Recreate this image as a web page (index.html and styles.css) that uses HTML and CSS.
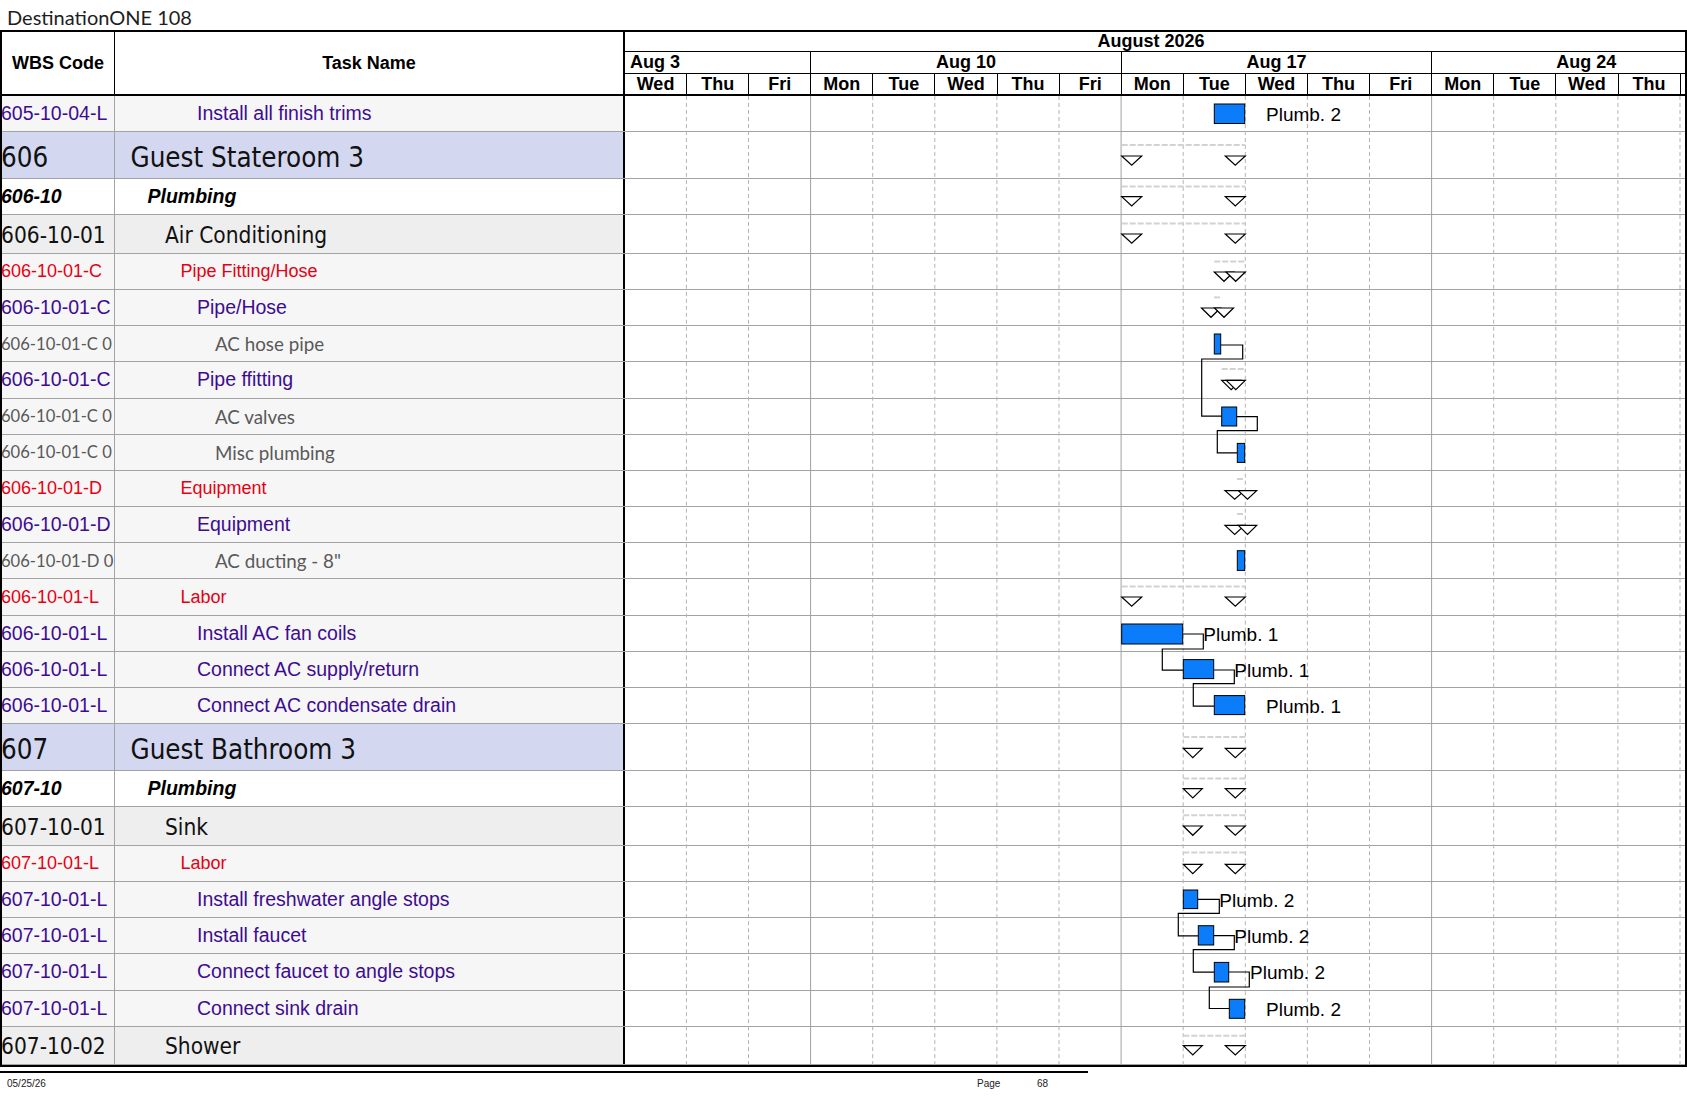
FILE: index.html
```html
<!DOCTYPE html>
<html lang="en">
<head>
<meta charset="utf-8">
<title>DestinationONE 108</title>
<link rel="stylesheet" href="styles.css">
</head>
<body>
<div class="doc-title">DestinationONE 108</div>
<div class="sheet">
  <div class="head">
    <div class="h-wbs">WBS Code</div>
    <div class="h-task">Task Name</div>
    <div class="h-gantt">
      <div class="month">August 2026</div>
      <div class="weeks">
        <div class="wk first">Aug 3</div>
        <div class="wk">Aug 10</div>
        <div class="wk">Aug 17</div>
        <div class="wk">Aug 24</div>
      </div>
      <div class="days">
        <div class="day">Wed</div><div class="day">Thu</div><div class="day">Fri</div>
        <div class="day">Mon</div><div class="day">Tue</div><div class="day">Wed</div><div class="day">Thu</div><div class="day">Fri</div>
        <div class="day">Mon</div><div class="day">Tue</div><div class="day">Wed</div><div class="day">Thu</div><div class="day">Fri</div>
        <div class="day">Mon</div><div class="day">Tue</div><div class="day">Wed</div><div class="day">Thu</div><div class="day stub"></div>
      </div>
    </div>
  </div>

  <div class="body">
    <svg class="grid" width="1060" height="970" viewBox="0 0 1060 970" preserveAspectRatio="none">
      <line class="dl" x1="61.4" y1="0" x2="61.4" y2="970"/>
      <line class="dl" x1="123.5" y1="0" x2="123.5" y2="970"/>
      <line class="wl" x1="185.6" y1="0" x2="185.6" y2="970"/>
      <line class="dl" x1="247.7" y1="0" x2="247.7" y2="970"/>
      <line class="dl" x1="309.8" y1="0" x2="309.8" y2="970"/>
      <line class="dl" x1="371.9" y1="0" x2="371.9" y2="970"/>
      <line class="dl" x1="434" y1="0" x2="434" y2="970"/>
      <line class="wl" x1="496.1" y1="0" x2="496.1" y2="970"/>
      <line class="dl" x1="558.2" y1="0" x2="558.2" y2="970"/>
      <line class="dl" x1="620.3" y1="0" x2="620.3" y2="970"/>
      <line class="dl" x1="682.4" y1="0" x2="682.4" y2="970"/>
      <line class="dl" x1="744.5" y1="0" x2="744.5" y2="970"/>
      <line class="wl" x1="806.6" y1="0" x2="806.6" y2="970"/>
      <line class="dl" x1="868.7" y1="0" x2="868.7" y2="970"/>
      <line class="dl" x1="930.8" y1="0" x2="930.8" y2="970"/>
      <line class="dl" x1="992.9" y1="0" x2="992.9" y2="970"/>
      <line class="dl" x1="1055" y1="0" x2="1055" y2="970"/>
    </svg>

    <!-- 1 -->
    <div class="row t-pur">
      <div class="c-wbs"><span>605-10-04-L</span></div>
      <div class="c-task"><span>Install all finish trims</span></div>
      <div class="c-gantt"><svg class="gfx" width="1060" height="36">
        <rect class="bar" x="589.3" y="8" width="30.4" height="19.5"/>
        <text class="lbl" x="641" y="25">Plumb. 2</text>
      </svg></div>
    </div>
    <!-- 2 -->
    <div class="row big t-big">
      <div class="c-wbs"><span>606</span></div>
      <div class="c-task"><span>Guest Stateroom 3</span></div>
      <div class="c-gantt"><svg class="gfx" width="1060" height="47">
        <line class="sum" x1="496.7" y1="13" x2="620.3" y2="13"/>
        <polygon class="tri" points="496.7,24 516.7,24 506.7,33.3"/>
        <polygon class="tri" points="600.3,24 620.3,24 610.3,33.3"/>
      </svg></div>
    </div>
    <!-- 3 -->
    <div class="row t-bi">
      <div class="c-wbs"><span>606-10</span></div>
      <div class="c-task"><span>Plumbing</span></div>
      <div class="c-gantt"><svg class="gfx" width="1060" height="36">
        <line class="sum" x1="496.7" y1="7.6" x2="620.3" y2="7.6"/>
        <polygon class="tri" points="496.7,17.6 516.7,17.6 506.7,26.9"/>
        <polygon class="tri" points="600.3,17.6 620.3,17.6 610.3,26.9"/>
      </svg></div>
    </div>
    <!-- 4 -->
    <div class="row grp t-grp">
      <div class="c-wbs"><span>606-10-01</span></div>
      <div class="c-task"><span>Air Conditioning</span></div>
      <div class="c-gantt"><svg class="gfx" width="1060" height="38">
        <line class="sum" x1="496.7" y1="8.4" x2="620.3" y2="8.4"/>
        <polygon class="tri" points="496.7,19 516.7,19 506.7,28.3"/>
        <polygon class="tri" points="600.3,19 620.3,19 610.3,28.3"/>
      </svg></div>
    </div>
    <!-- 5 -->
    <div class="row t-red">
      <div class="c-wbs"><span>606-10-01-C</span></div>
      <div class="c-task"><span>Pipe Fitting/Hose</span></div>
      <div class="c-gantt"><svg class="gfx" width="1060" height="36">
        <line class="sum" x1="589.3" y1="7.4" x2="620.3" y2="7.4"/>
        <polygon class="tri" points="589.3,18 608.7,18 599,27.3"/>
        <polygon class="tri" points="601,18 620.3,18 610.7,27.3"/>
      </svg></div>
    </div>
    <!-- 6 -->
    <div class="row t-pur">
      <div class="c-wbs"><span>606-10-01-C</span></div>
      <div class="c-task"><span>Pipe/Hose</span></div>
      <div class="c-gantt"><svg class="gfx" width="1060" height="36">
        <line class="sum" x1="589" y1="7.4" x2="597" y2="7.4"/>
        <polygon class="tri" points="576.5,18 595.5,18 586,27.3"/>
        <polygon class="tri" points="589.5,18 608.5,18 599,27.3"/>
      </svg></div>
    </div>
    <!-- 7 -->
    <div class="row t-gray">
      <div class="c-wbs"><span>606-10-01-C 0</span></div>
      <div class="c-task"><span>AC hose pipe</span></div>
      <div class="c-gantt"><svg class="gfx" width="1060" height="36">
        <path class="lnk" d="M595.7 19H617.7V33H576.7V90.1H596.7"/>
        <rect class="bar" x="589.3" y="8" width="6.4" height="20"/>
      </svg></div>
    </div>
    <!-- 8 -->
    <div class="row t-pur">
      <div class="c-wbs"><span>606-10-01-C</span></div>
      <div class="c-task"><span>Pipe ffitting</span></div>
      <div class="c-gantt"><svg class="gfx" width="1060" height="36">
        <line class="sum" x1="596.7" y1="7" x2="620.3" y2="7"/>
        <polygon class="tri" points="596.7,18.4 615.7,18.4 606.2,27.7"/>
        <polygon class="tri" points="601.3,18.4 620.3,18.4 610.8,27.7"/>
      </svg></div>
    </div>
    <!-- 9 -->
    <div class="row t-gray">
      <div class="c-wbs"><span>606-10-01-C 0</span></div>
      <div class="c-task"><span>AC valves</span></div>
      <div class="c-gantt"><svg class="gfx" width="1060" height="36">
        <path class="lnk" d="M611.7 17.7H632.3V31.7H592.3V53.9H612.3"/>
        <rect class="bar" x="596.7" y="8" width="15" height="19"/>
      </svg></div>
    </div>
    <!-- 10 -->
    <div class="row t-gray">
      <div class="c-wbs"><span>606-10-01-C 0</span></div>
      <div class="c-task"><span>Misc plumbing</span></div>
      <div class="c-gantt"><svg class="gfx" width="1060" height="36">
        <rect class="bar" x="612.3" y="8.4" width="7.4" height="19"/>
      </svg></div>
    </div>
    <!-- 11 -->
    <div class="row t-red">
      <div class="c-wbs"><span>606-10-01-D</span></div>
      <div class="c-task"><span>Equipment</span></div>
      <div class="c-gantt"><svg class="gfx" width="1060" height="36">
        <line class="sum" x1="612" y1="8" x2="620" y2="8"/>
        <polygon class="tri" points="600,19.7 619.5,19.7 609.7,28.3"/>
        <polygon class="tri" points="613.3,19.7 631.7,19.7 622.5,28.3"/>
      </svg></div>
    </div>
    <!-- 12 -->
    <div class="row t-pur">
      <div class="c-wbs"><span>606-10-01-D</span></div>
      <div class="c-task"><span>Equipment</span></div>
      <div class="c-gantt"><svg class="gfx" width="1060" height="36">
        <line class="sum" x1="612" y1="7" x2="620" y2="7"/>
        <polygon class="tri" points="600,18.4 619.5,18.4 609.7,27.4"/>
        <polygon class="tri" points="613.3,18.4 631.7,18.4 622.5,27.4"/>
      </svg></div>
    </div>
    <!-- 13 -->
    <div class="row t-gray">
      <div class="c-wbs"><span>606-10-01-D 0</span></div>
      <div class="c-task"><span>AC ducting - 8"</span></div>
      <div class="c-gantt"><svg class="gfx" width="1060" height="36">
        <rect class="bar" x="612.3" y="7.7" width="7.4" height="19.7"/>
      </svg></div>
    </div>
    <!-- 14 -->
    <div class="row t-red">
      <div class="c-wbs"><span>606-10-01-L</span></div>
      <div class="c-task"><span>Labor</span></div>
      <div class="c-gantt"><svg class="gfx" width="1060" height="36">
        <line class="sum" x1="496.7" y1="7.4" x2="620.3" y2="7.4"/>
        <polygon class="tri" points="496.7,18 516.7,18 506.7,27.3"/>
        <polygon class="tri" points="600.3,18 620.3,18 610.3,27.3"/>
      </svg></div>
    </div>
    <!-- 15 -->
    <div class="row t-pur">
      <div class="c-wbs"><span>606-10-01-L</span></div>
      <div class="c-task"><span>Install AC fan coils</span></div>
      <div class="c-gantt"><svg class="gfx" width="1060" height="36">
        <path class="lnk" d="M557.7 18H578.3V33H537.3V54.2H558.3"/>
        <rect class="bar" x="496.7" y="8" width="61" height="20"/>
        <text class="lbl" x="578.3" y="25">Plumb. 1</text>
      </svg></div>
    </div>
    <!-- 16 -->
    <div class="row t-pur">
      <div class="c-wbs"><span>606-10-01-L</span></div>
      <div class="c-task"><span>Connect AC supply/return</span></div>
      <div class="c-gantt"><svg class="gfx" width="1060" height="36">
        <path class="lnk" d="M588.7 18H609.3V31.6H568.3V54.2H589.3"/>
        <rect class="bar" x="558.3" y="7.6" width="30.4" height="19"/>
        <text class="lbl" x="609.3" y="25">Plumb. 1</text>
      </svg></div>
    </div>
    <!-- 17 -->
    <div class="row t-pur">
      <div class="c-wbs"><span>606-10-01-L</span></div>
      <div class="c-task"><span>Connect AC condensate drain</span></div>
      <div class="c-gantt"><svg class="gfx" width="1060" height="36">
        <rect class="bar" x="589.3" y="7.6" width="30.4" height="19"/>
        <text class="lbl" x="641" y="25">Plumb. 1</text>
      </svg></div>
    </div>
    <!-- 18 -->
    <div class="row big t-big">
      <div class="c-wbs"><span>607</span></div>
      <div class="c-task"><span>Guest Bathroom 3</span></div>
      <div class="c-gantt"><svg class="gfx" width="1060" height="47">
        <line class="sum" x1="558.3" y1="13" x2="620.3" y2="13"/>
        <polygon class="tri" points="558.3,24.4 577.3,24.4 567.8,33.7"/>
        <polygon class="tri" points="600.3,24.4 620.3,24.4 610.3,33.7"/>
      </svg></div>
    </div>
    <!-- 19 -->
    <div class="row t-bi">
      <div class="c-wbs"><span>607-10</span></div>
      <div class="c-task"><span>Plumbing</span></div>
      <div class="c-gantt"><svg class="gfx" width="1060" height="36">
        <line class="sum" x1="558.3" y1="7.6" x2="620.3" y2="7.6"/>
        <polygon class="tri" points="558.3,17.6 577.3,17.6 567.8,26.9"/>
        <polygon class="tri" points="600.3,17.6 620.3,17.6 610.3,26.9"/>
      </svg></div>
    </div>
    <!-- 20 -->
    <div class="row grp t-grp">
      <div class="c-wbs"><span>607-10-01</span></div>
      <div class="c-task"><span>Sink</span></div>
      <div class="c-gantt"><svg class="gfx" width="1060" height="38">
        <line class="sum" x1="558.3" y1="8.3" x2="620.3" y2="8.3"/>
        <polygon class="tri" points="558.3,19 577.3,19 567.8,28.3"/>
        <polygon class="tri" points="600.3,19 620.3,19 610.3,28.3"/>
      </svg></div>
    </div>
    <!-- 21 -->
    <div class="row t-red">
      <div class="c-wbs"><span>607-10-01-L</span></div>
      <div class="c-task"><span>Labor</span></div>
      <div class="c-gantt"><svg class="gfx" width="1060" height="36">
        <line class="sum" x1="558.3" y1="6.6" x2="620.3" y2="6.6"/>
        <polygon class="tri" points="558.3,18.3 577.3,18.3 567.8,27.6"/>
        <polygon class="tri" points="600.3,18.3 620.3,18.3 610.3,27.6"/>
      </svg></div>
    </div>
    <!-- 22 -->
    <div class="row t-pur">
      <div class="c-wbs"><span>607-10-01-L</span></div>
      <div class="c-task"><span>Install freshwater angle stops</span></div>
      <div class="c-gantt"><svg class="gfx" width="1060" height="36">
        <path class="lnk" d="M572.7 17.3H594.3V31.3H553.3V53.9H573.3"/>
        <rect class="bar" x="558.3" y="8" width="14.4" height="18.6"/>
        <text class="lbl" x="594.3" y="25">Plumb. 2</text>
      </svg></div>
    </div>
    <!-- 23 -->
    <div class="row t-pur">
      <div class="c-wbs"><span>607-10-01-L</span></div>
      <div class="c-task"><span>Install faucet</span></div>
      <div class="c-gantt"><svg class="gfx" width="1060" height="36">
        <path class="lnk" d="M588.7 17.7H609.3V31.7H568.3V54.2H589.3"/>
        <rect class="bar" x="573.3" y="7.7" width="15.4" height="19.3"/>
        <text class="lbl" x="609.3" y="25">Plumb. 2</text>
      </svg></div>
    </div>
    <!-- 24 -->
    <div class="row t-pur">
      <div class="c-wbs"><span>607-10-01-L</span></div>
      <div class="c-task"><span>Connect faucet to angle stops</span></div>
      <div class="c-gantt"><svg class="gfx" width="1060" height="36">
        <path class="lnk" d="M603.7 18H624.3V33H584.3V54.5H604.3"/>
        <rect class="bar" x="589.3" y="8.4" width="14.4" height="19.6"/>
        <text class="lbl" x="625" y="25">Plumb. 2</text>
      </svg></div>
    </div>
    <!-- 25 -->
    <div class="row t-pur">
      <div class="c-wbs"><span>607-10-01-L</span></div>
      <div class="c-task"><span>Connect sink drain</span></div>
      <div class="c-gantt"><svg class="gfx" width="1060" height="36">
        <rect class="bar" x="604.3" y="8.3" width="15.4" height="19"/>
        <text class="lbl" x="641" y="25">Plumb. 2</text>
      </svg></div>
    </div>
    <!-- 26 -->
    <div class="row grp t-grp">
      <div class="c-wbs"><span>607-10-02</span></div>
      <div class="c-task"><span>Shower</span></div>
      <div class="c-gantt"><svg class="gfx" width="1060" height="38">
        <line class="sum" x1="558.3" y1="8.7" x2="620.3" y2="8.7"/>
        <polygon class="tri" points="558.3,18.7 577.3,18.7 567.8,28"/>
        <polygon class="tri" points="600.3,18.7 620.3,18.7 610.3,28"/>
      </svg></div>
    </div>
  </div>
</div>
<div class="footer">
  <div class="f-date">05/25/26</div>
  <div class="f-page">Page</div>
  <div class="f-num">68</div>
</div>
</body>
</html>
```

FILE: styles.css
```css
* { box-sizing: border-box; }

html, body {
  margin: 0;
  padding: 0;
  background: #fff;
}

body {
  width: 1687px;
  height: 1097px;
  overflow: hidden;
  font-family: "Liberation Sans", Arial, sans-serif;
  color: #000;
}

.doc-title {
  height: 30px;
  padding: 5px 0 0 7px;
  font-family: Lato, "Liberation Sans", sans-serif;
  font-size: 20px;
  line-height: 25px;
  color: #1e1e1e;
  white-space: nowrap;
}

.sheet {
  width: 1687px;
  border: 2px solid #000;
}

/* ---------- header ---------- */
.head {
  display: flex;
  height: 64px;
  border-bottom: 2px solid #000;
}

.h-wbs,
.h-task {
  display: flex;
  align-items: center;
  justify-content: center;
  font-weight: bold;
  font-size: 18px;
}

.h-wbs {
  width: 113px;
  flex: none;
  border-right: 1px solid #000;
}

.h-task {
  width: 510px;
  flex: none;
  border-right: 2px solid #000;
}

.h-gantt {
  flex: 1;
  min-width: 0;
  overflow: hidden;
  display: flex;
  flex-direction: column;
  font-weight: bold;
  font-size: 18px;
}

.month {
  height: 20px;
  border-bottom: 1px solid #000;
  line-height: 19px;
  text-align: center;
  padding-right: 8px;
  white-space: nowrap;
}

.weeks {
  height: 22px;
  display: flex;
  border-bottom: 1px solid #000;
}

.wk {
  flex: none;
  width: 310.5px;
  border-right: 1px solid #000;
  line-height: 21px;
  text-align: center;
  white-space: nowrap;
}

.wk.first {
  width: 186.3px;
  text-align: left;
  padding-left: 5px;
}

.wk:last-child {
  width: 254px;
  border-right: none;
  padding-left: 124px;
  text-align: left;
}

.days {
  height: 20px;
  display: flex;
}

.day {
  flex: none;
  width: 62.1px;
  border-right: 1px solid #000;
  line-height: 20px;
  text-align: center;
}

.day.stub {
  width: 4px;
  border-right: none;
}

/* ---------- body ---------- */
.body {
  position: relative;
}

.grid {
  position: absolute;
  left: 623px;
  top: 0;
  width: 1060px;
  height: 100%;
  z-index: 1;
  pointer-events: none;
}

.grid .dl {
  stroke: #b3b3b3;
  stroke-width: 1;
  stroke-dasharray: 4 3;
}

.grid .wl {
  stroke: #a0a0a0;
  stroke-width: 1;
}

.row {
  display: flex;
  height: 36.2px;
  border-bottom: 1px solid #a3a3a3;
}

.row.big { height: 47px; }
.row.grp { height: 38.4px; }

.c-wbs,
.c-task {
  display: flex;
  align-items: center;
  overflow: hidden;
  white-space: nowrap;
  background: #f6f6f6;
}

.c-wbs {
  width: 113px;
  flex: none;
  border-right: 1px solid #a3a3a3;
}

.c-wbs span {
  margin-left: -1px;
}

.c-task {
  width: 510px;
  flex: none;
  border-right: 2px solid #000;
}

.c-gantt {
  flex: 1;
  position: relative;
}

.gfx {
  position: absolute;
  left: 0;
  top: 0;
  overflow: visible;
  z-index: 2;
}

.bar {
  fill: #0b7dfa;
  stroke: #000;
  stroke-width: 1;
}

.sum {
  stroke: #d2d2d2;
  stroke-width: 2;
  stroke-dasharray: 6 2;
}

.tri {
  fill: #fff;
  stroke: #000;
  stroke-width: 1.2;
  stroke-linejoin: miter;
}

.lnk {
  fill: none;
  stroke: #000;
  stroke-width: 1.2;
}

.lbl {
  font-family: "Liberation Sans", Arial, sans-serif;
  font-size: 19px;
  fill: #000;
}

/* ---------- row types ---------- */
.t-big .c-wbs,
.t-big .c-task {
  background: #d3d8f0;
  font-family: "DejaVu Sans Condensed", "DejaVu Sans", sans-serif;
  font-stretch: semi-condensed;
  font-size: 27.5px;
  color: #111;
  padding-top: 3px;
}
.t-big .c-task { padding-left: 15.5px; }

.t-bi .c-wbs,
.t-bi .c-task {
  background: #fff;
  font-weight: bold;
  font-style: italic;
  font-size: 19.5px;
}
.t-bi .c-task { padding-left: 32.5px; }

.t-grp .c-wbs,
.t-grp .c-task {
  background: #eeeeee;
  font-family: "DejaVu Sans Condensed", "DejaVu Sans", sans-serif;
  font-stretch: semi-condensed;
  font-size: 22.5px;
  color: #111;
  padding-top: 1px;
}
.t-grp .c-task { padding-left: 50px; }

.t-red .c-wbs,
.t-red .c-task {
  font-size: 18px;
  color: #e60012;
}
.t-red .c-task { padding-left: 65.4px; }

.t-pur .c-wbs,
.t-pur .c-task {
  font-size: 19.5px;
  color: #3d0c91;
}
.t-pur .c-task { padding-left: 82px; }

.t-gray .c-wbs,
.t-gray .c-task {
  font-family: Lato, "Liberation Sans", sans-serif;
  font-size: 18.8px;
  color: #595959;
}
.t-gray .c-wbs { font-size: 16.6px; }
.t-gray .c-task { padding-left: 100px; }

/* ---------- footer ---------- */
.footer {
  width: 1088px;
  margin-top: 4px;
  border-top: 2px solid #000;
  display: flex;
  padding-top: 5px;
  font-family: "Liberation Sans", Arial, sans-serif;
  font-size: 10px;
  line-height: 12px;
  color: #222;
}

.f-date {
  width: 977px;
  padding-left: 7px;
}

.f-page {
  width: 60px;
}
```
